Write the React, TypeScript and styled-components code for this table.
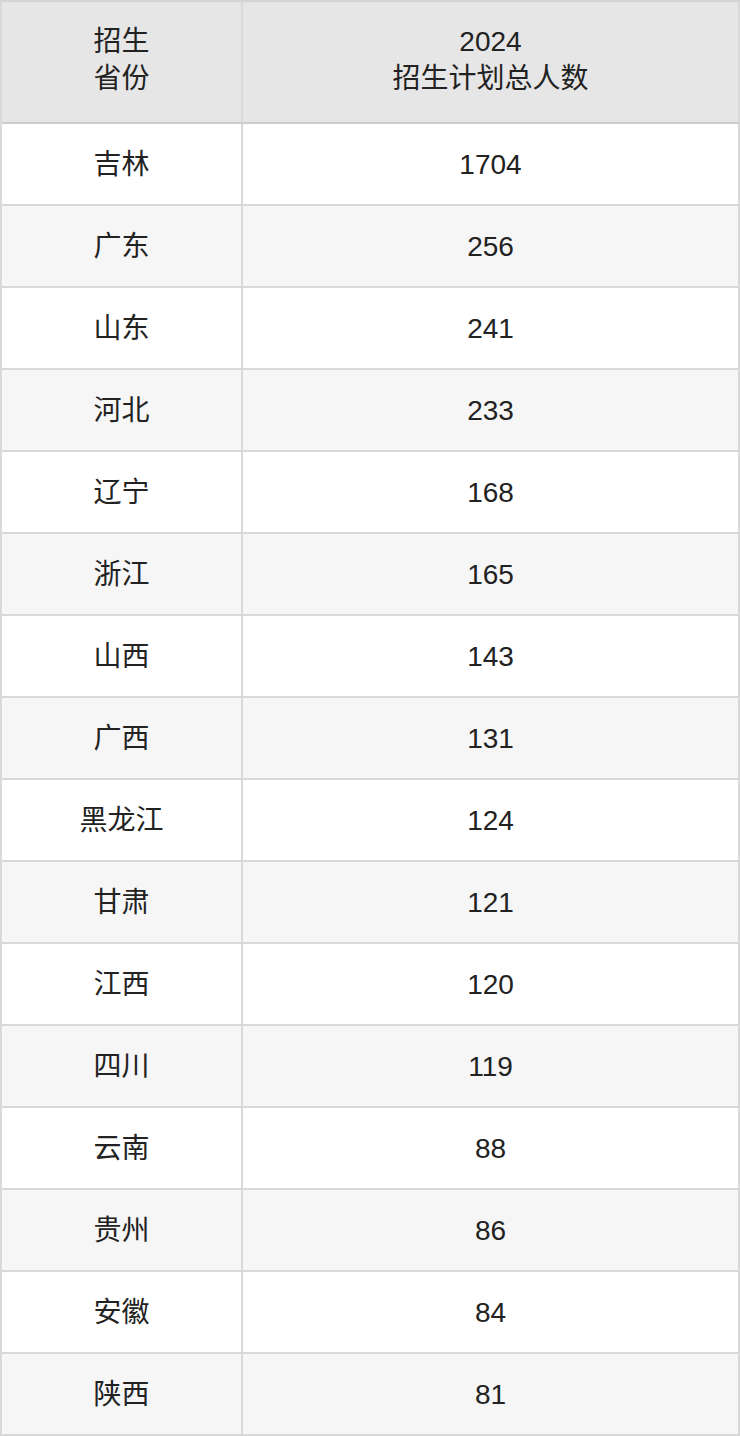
import React from "react";
import styled, { createGlobalStyle } from "styled-components";

const GlobalStyle = createGlobalStyle`
  html, body {
    margin: 0;
    padding: 0;
    background: #ffffff;
  }
  body {
    font-family: "Liberation Sans", "Noto Sans CJK SC", sans-serif;
    color: #222222;
  }
`;

const Table = styled.div`
  width: 740px;
  box-sizing: border-box;
  border-top: 2px solid #d4d4d4;
  border-left: 2px solid #d9d9d9;
`;

const Row = styled.div<{ $head?: boolean; $alt?: boolean }>`
  display: grid;
  grid-template-columns: 241px 497px;
  height: ${(p) => (p.$head ? "122px" : "82px")};
  background: ${(p) => (p.$head ? "#e6e6e6" : p.$alt ? "#f6f6f6" : "#ffffff")};
`;

const Cell = styled.div<{ $head?: boolean }>`
  box-sizing: border-box;
  display: flex;
  align-items: center;
  justify-content: center;
  text-align: center;
  padding-bottom: ${(p) => (p.$head ? "4px" : "0")};
  border-right: 2px solid #d9d9d9;
  border-bottom: 2px solid ${(p) => (p.$head ? "#cccccc" : "#d9d9d9")};
  font-size: 28px;
  line-height: 37px;
  color: #222222;
`;

const rows: [string, string][] = [
  ["吉林", "1704"],
  ["广东", "256"],
  ["山东", "241"],
  ["河北", "233"],
  ["辽宁", "168"],
  ["浙江", "165"],
  ["山西", "143"],
  ["广西", "131"],
  ["黑龙江", "124"],
  ["甘肃", "121"],
  ["江西", "120"],
  ["四川", "119"],
  ["云南", "88"],
  ["贵州", "86"],
  ["安徽", "84"],
  ["陕西", "81"],
];

const App = () => {
  return (
    <>
      <GlobalStyle />
      <Table>
        <Row $head>
          <Cell $head>
            招生
            <br />
            省份
          </Cell>
          <Cell $head>
            2024
            <br />
            招生计划总人数
          </Cell>
        </Row>
        {rows.map(([prov, num], i) => (
          <Row key={prov} $alt={i % 2 === 1}>
            <Cell>{prov}</Cell>
            <Cell>{num}</Cell>
          </Row>
        ))}
      </Table>
    </>
  );
};

export default App;
